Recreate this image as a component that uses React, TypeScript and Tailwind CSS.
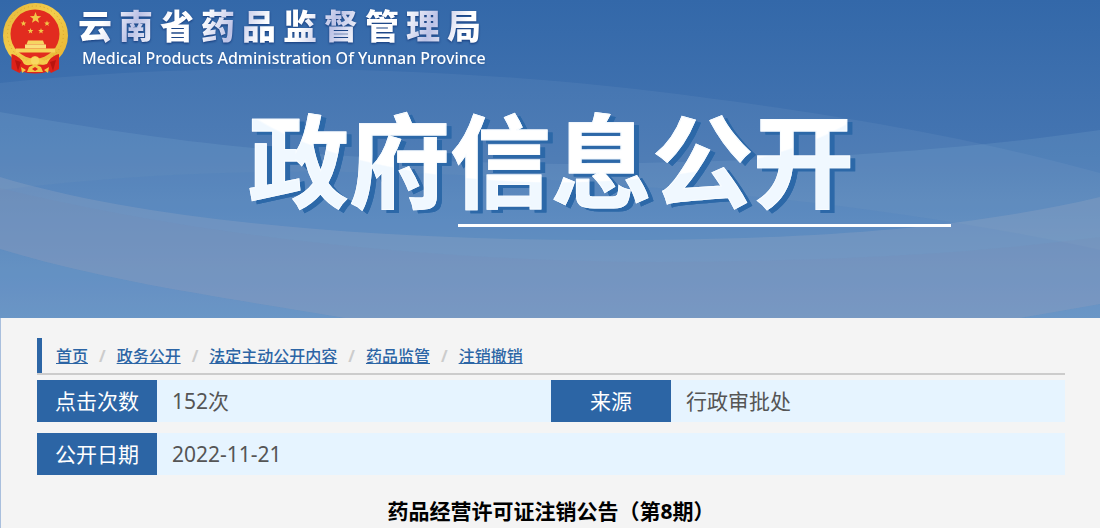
const crumbs = ['首页', '政务公开', '法定主动公开内容', '药品监管', '注销撤销'];

const stars = [
  { x: 35.5, y: 18, r: 6 },
  { x: 23.5, y: 23.5, r: 3 },
  { x: 47, y: 23.5, r: 3 },
  { x: 30.5, y: 31, r: 3 },
  { x: 41, y: 31, r: 3 },
];

function starPoints(x: number, y: number, r: number) {
  return Array.from({ length: 10 }, (_, i) => {
    const radius = i % 2 === 0 ? r : r * 0.42;
    const angle = (Math.PI / 5) * i - Math.PI / 2;
    return `${x + radius * Math.cos(angle)},${y + radius * Math.sin(angle)}`;
  }).join(' ');
}

function Emblem() {
  return (
    <svg viewBox="0 0 70 76" className="h-[76px] w-[70px] shrink-0" aria-hidden="true">
      <defs>
        <linearGradient id="gold" x1="0" y1="0" x2="1" y2="1">
          <stop offset="0" stopColor="#e3b43a" />
          <stop offset="0.45" stopColor="#f3ce4c" />
          <stop offset="1" stopColor="#e6b030" />
        </linearGradient>
      </defs>
      <ellipse cx="35.5" cy="35.5" rx="32.5" ry="32.5" fill="url(#gold)" />
      <ellipse cx="35.5" cy="34" rx="28" ry="28" fill="none" stroke="#d8a22c" strokeWidth="1" strokeDasharray="1 3" />
      <ellipse cx="35" cy="34" rx="24.5" ry="24.5" fill="#e22c1f" />
      {stars.map((s) => (
        <polygon key={`${s.x}-${s.y}`} points={starPoints(s.x, s.y, s.r)} fill="#f2c648" />
      ))}
      {/* gate tower */}
      <path d="M28 40.500h15l1.500 4h-18z" fill="#f6d562" />
      <path d="M25 44.500h21v4h-21z" fill="#f9df7c" />
      <path d="M16 48.500h39v4h-39z" fill="#f6d35a" />
      {/* ribbons */}
      <path d="M11.500 54q5 1 10 6l7 1-9 12-8-4z" fill="#dd2219" />
      <path d="M59 54q-5 1-10 6l-7 1 9 12 8-4z" fill="#dd2219" />
      <path d="M15 60l6 2-3 9zM56 60l-6 2 3 9z" fill="#b8150f" />
      <path d="M20 64l15 1 15-1v7q-15 5-30 0z" fill="#df251a" />
      {/* gear and wheat stems */}
      <path d="M20 57q5 5 10 2 5-6 10 0 6 3 11-2l-4 7q-6 2-8-1l-3 1-3-1q-4 4-9 1z" fill="#f5cc4c" />
      <circle cx="35" cy="61" r="4" fill="#f8d860" />
      <path d="M29 67l6-3 6 3 2 5h-16zM21 67l5 3-4 3zM49 67l-5 3 4 3z" fill="#f3c743" />
      <path d="M32 69l3-2 3 2-3 2z" fill="#df251a" />
    </svg>
  );
}

function Waves() {
  return (
    <svg
      viewBox="0 0 1100 318"
      preserveAspectRatio="none"
      className="absolute inset-0 h-full w-full"
      aria-hidden="true"
    >
      <defs>
        <linearGradient id="sky" x1="0" y1="0" x2="0" y2="1">
          <stop offset="0" stopColor="#3368a9" />
          <stop offset="0.5" stopColor="#4676b2" />
          <stop offset="1" stopColor="#6590c1" />
        </linearGradient>
      </defs>
      <rect width="1100" height="318" fill="url(#sky)" />
      <path d="M0 83C240 57 500 70 700 97C860 118 980 140 1100 173V318H0z" fill="#fff" fillOpacity="0.05" />
      <path d="M0 112C160 140 300 160 560 164C800 162 960 150 1100 130V318H0z" fill="#8cb8dc" fillOpacity="0.16" />
      <path d="M0 190C240 160 480 170 770 198C900 212 1010 230 1100 250V318H0z" fill="#3f78c0" fillOpacity="0.14" />
      <path
        d="M0 177C150 222 380 240 600 240C800 240 960 230 1100 197V304L1020 318H345C210 295 110 282 0 249z"
        fill="#a8b0c4"
        fillOpacity="0.24"
      />
      <path
        d="M0 188C150 225 380 261 660 262C860 261 980 252 1100 237V304L1020 318H345C210 295 110 282 0 249z"
        fill="#7c84b0"
        fillOpacity="0.12"
      />
    </svg>
  );
}

function Banner() {
  return (
    <header className="relative h-[318px] overflow-hidden bg-[#4a7ab5]">
      <Waves />
      <div className="relative flex h-[76px] gap-2">
        <Emblem />
        <div className="pt-1 whitespace-nowrap">
          <p className="bg-[repeating-linear-gradient(115deg,#fff_0px,#fff_30px,#bcc2e6_60px,#fff_90px)] bg-clip-text font-['Noto_Sans_CJK_SC'] text-[34px] leading-[42px] font-black tracking-[7px] text-transparent drop-shadow-[0_1px_1px_#14397a]">
            云南省药品监督管理局
          </p>
          <p className="pl-1 font-['Noto_Sans'] text-base leading-6 font-medium text-white drop-shadow-[0_1px_1px_#2a5a98]">
            Medical Products Administration Of Yunnan Province
          </p>
        </div>
      </div>
      <div className="relative mx-auto w-[604px]">
        <h1 className="bg-[radial-gradient(ellipse_347px_127px_at_51%_-20px,#fff_99%,#f0f8ff_100%)] bg-clip-text pt-3 text-center font-['Noto_Sans_CJK_SC'] text-[101px] leading-[136px] font-bold whitespace-nowrap text-transparent drop-shadow-[5px_3px_0_#2c68a8] [-webkit-text-stroke:1px_#f8fcff]">
          政府信息公开
        </h1>
        <div className="ml-[210px] h-[3px] w-[493px] bg-white" />
      </div>
    </header>
  );
}

function Label({ children }: { children: string }) {
  return (
    <th scope="row" className="h-[42px] w-[120px] bg-[#2c65a5] text-center font-normal text-white">
      {children}
    </th>
  );
}

export default function App() {
  return (
    <div className="flex min-h-screen flex-col bg-[#f4f4f4] font-['Noto_Sans','Noto_Sans_CJK_SC',sans-serif]">
      <Banner />
      <main className="grow border-l border-[#a9bfdd] pt-5 pr-[35px] pl-9">
        <nav aria-label="breadcrumb" className="border-b-2 border-[#ccc]">
          <ol className="flex h-[35px] items-center gap-[11px] border-l-[5px] border-[#2c65a5] pl-[14px] text-base font-medium">
            {crumbs.map((crumb, index) => (
              <li key={crumb} className="flex items-center gap-[11px]">
                {index > 0 && <span className="font-bold text-[#ccc]">/</span>}
                <a href="#" className="text-[#2c65a5] underline">
                  {crumb}
                </a>
              </li>
            ))}
          </ol>
        </nav>

        <table className="mt-[5px] w-full table-fixed text-[21px] leading-[42px] text-[#555]">
          <colgroup>
            <col className="w-[120px]" />
            <col />
            <col className="w-[120px]" />
            <col />
          </colgroup>
          <tbody>
            <tr className="bg-[#e6f4ff]">
              <Label>点击次数</Label>
              <td className="pl-[15px]">152次</td>
              <Label>来源</Label>
              <td className="pl-[15px]">行政审批处</td>
            </tr>
            <tr aria-hidden="true">
              <td colSpan={4} className="h-[11px]" />
            </tr>
            <tr className="bg-[#e6f4ff]">
              <Label>公开日期</Label>
              <td colSpan={3} className="pl-[15px]">
                2022-11-21
              </td>
            </tr>
          </tbody>
        </table>

        <h2 className="pt-5 text-center text-[21px] leading-8 font-bold text-black">
          药品经营许可证注销公告（第8期）
        </h2>
      </main>
    </div>
  );
}
